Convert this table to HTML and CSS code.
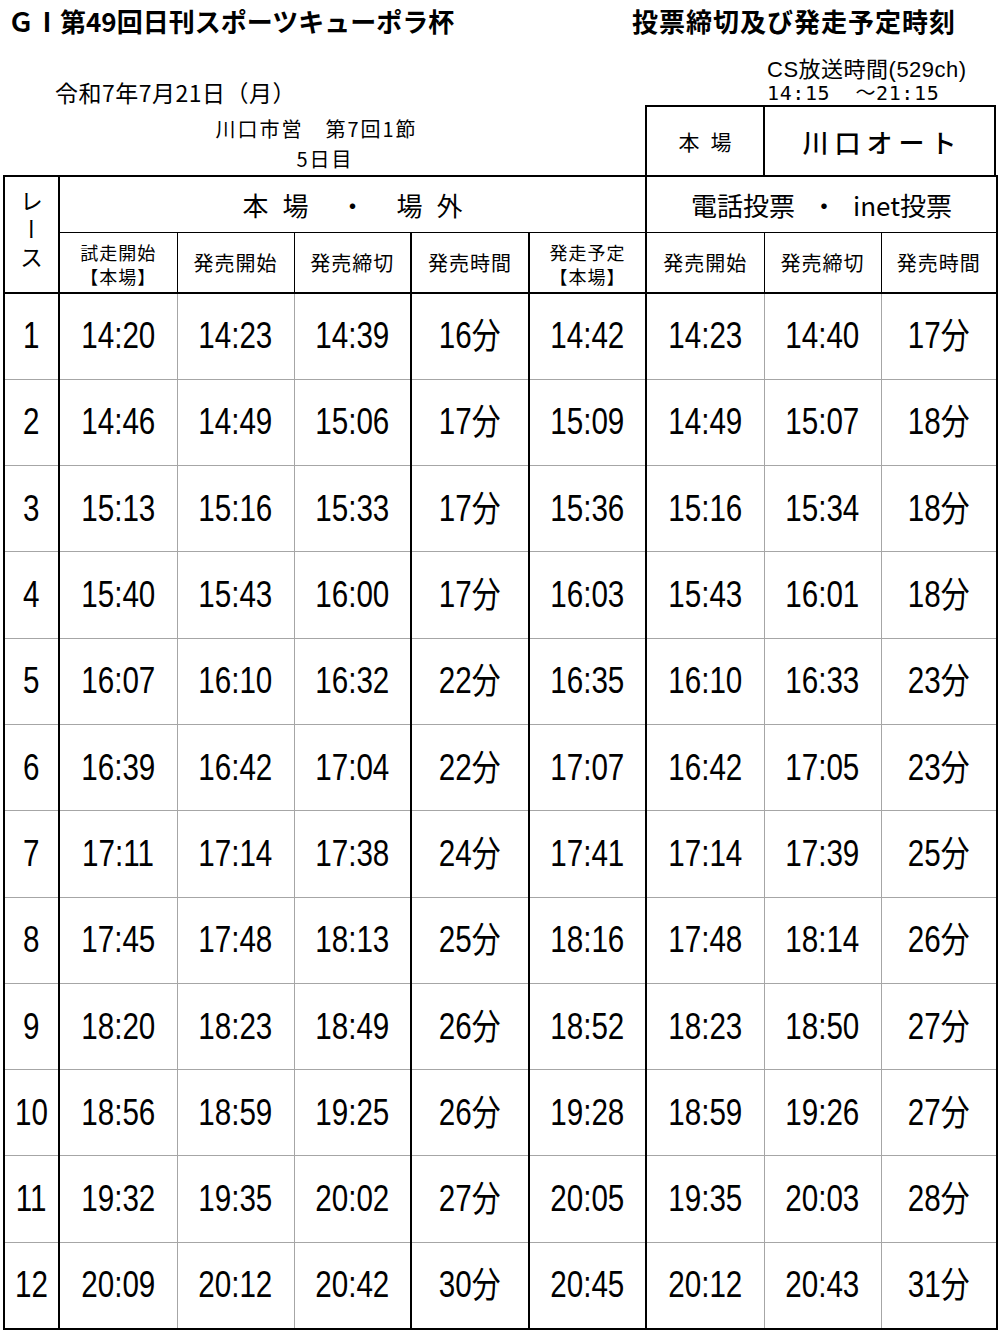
FILE: index.html
```html
<!DOCTYPE html>
<html lang="ja">
<head>
<meta charset="utf-8">
<title>投票締切及び発走予定時刻</title>
<link rel="stylesheet" href="styles.css">
</head>
<body>
<div class="page">
  <header class="titles">
    <h1 class="title-left">ＧⅠ第49回日刊スポーツキューポラ杯</h1>
    <h1 class="title-right">投票締切及び発走予定時刻</h1>
  </header>
  <div class="meta">
    <div class="meta-left">
      <p class="date">令和7年7月21日（月）</p>
      <p class="venue">川口市営　第7回1節</p>
      <p class="day">5日目</p>
    </div>
    <div class="meta-right">
      <div class="cs">
        <p class="cs-line">CS放送時間(529ch)</p>
        <p class="cs-time">14:15&nbsp;&nbsp;～21:15</p>
      </div>
      <div class="venue-box">
        <div class="vb-label"><span>本</span><span>場</span></div>
        <div class="vb-name">川口オート</div>
      </div>
    </div>
  </div>
  <table class="sched">
    <colgroup>
      <col class="w-race"><col class="w-a"><col class="w-b"><col class="w-c"><col class="w-d"><col class="w-e"><col class="w-f"><col class="w-g"><col class="w-h">
    </colgroup>
    <thead>
      <tr class="h1">
        <th class="race-h" rowspan="2"><span class="vert">レース</span></th>
        <th class="grp grp-a" colspan="5"><span class="g">本</span><span class="g">場</span><span class="g dot">・</span><span class="g">場</span><span class="g">外</span></th>
        <th class="grp grp-b" colspan="3">電話投票<span class="dot2">・</span>inet投票</th>
      </tr>
      <tr class="h2">
        <th class="sub thin"><span class="two"><span class="ln">試走開始</span><span class="ln">【本場】</span></span></th>
        <th class="sub thin">発売開始</th>
        <th class="sub thin">発売締切</th>
        <th class="sub thick">発売時間</th>
        <th class="sub thick"><span class="two"><span class="ln">発走予定</span><span class="ln">【本場】</span></span></th>
        <th class="sub thick">発売開始</th>
        <th class="sub thin">発売締切</th>
        <th class="sub thin">発売時間</th>
      </tr>
    </thead>
    <tbody>
      <tr><td class="rn"><span class="t">1</span></td><td class="bk"><span class="t">14:20</span></td><td class="gy"><span class="t">14:23</span></td><td class="gy"><span class="t">14:39</span></td><td class="bk"><span class="t">16<span class="fun">分</span></span></td><td class="bk"><span class="t">14:42</span></td><td class="bk"><span class="t">14:23</span></td><td class="gy"><span class="t">14:40</span></td><td class="gy"><span class="t">17<span class="fun">分</span></span></td></tr>
      <tr><td class="rn"><span class="t">2</span></td><td class="bk"><span class="t">14:46</span></td><td class="gy"><span class="t">14:49</span></td><td class="gy"><span class="t">15:06</span></td><td class="bk"><span class="t">17<span class="fun">分</span></span></td><td class="bk"><span class="t">15:09</span></td><td class="bk"><span class="t">14:49</span></td><td class="gy"><span class="t">15:07</span></td><td class="gy"><span class="t">18<span class="fun">分</span></span></td></tr>
      <tr><td class="rn"><span class="t">3</span></td><td class="bk"><span class="t">15:13</span></td><td class="gy"><span class="t">15:16</span></td><td class="gy"><span class="t">15:33</span></td><td class="bk"><span class="t">17<span class="fun">分</span></span></td><td class="bk"><span class="t">15:36</span></td><td class="bk"><span class="t">15:16</span></td><td class="gy"><span class="t">15:34</span></td><td class="gy"><span class="t">18<span class="fun">分</span></span></td></tr>
      <tr><td class="rn"><span class="t">4</span></td><td class="bk"><span class="t">15:40</span></td><td class="gy"><span class="t">15:43</span></td><td class="gy"><span class="t">16:00</span></td><td class="bk"><span class="t">17<span class="fun">分</span></span></td><td class="bk"><span class="t">16:03</span></td><td class="bk"><span class="t">15:43</span></td><td class="gy"><span class="t">16:01</span></td><td class="gy"><span class="t">18<span class="fun">分</span></span></td></tr>
      <tr><td class="rn"><span class="t">5</span></td><td class="bk"><span class="t">16:07</span></td><td class="gy"><span class="t">16:10</span></td><td class="gy"><span class="t">16:32</span></td><td class="bk"><span class="t">22<span class="fun">分</span></span></td><td class="bk"><span class="t">16:35</span></td><td class="bk"><span class="t">16:10</span></td><td class="gy"><span class="t">16:33</span></td><td class="gy"><span class="t">23<span class="fun">分</span></span></td></tr>
      <tr><td class="rn"><span class="t">6</span></td><td class="bk"><span class="t">16:39</span></td><td class="gy"><span class="t">16:42</span></td><td class="gy"><span class="t">17:04</span></td><td class="bk"><span class="t">22<span class="fun">分</span></span></td><td class="bk"><span class="t">17:07</span></td><td class="bk"><span class="t">16:42</span></td><td class="gy"><span class="t">17:05</span></td><td class="gy"><span class="t">23<span class="fun">分</span></span></td></tr>
      <tr><td class="rn"><span class="t">7</span></td><td class="bk"><span class="t">17:11</span></td><td class="gy"><span class="t">17:14</span></td><td class="gy"><span class="t">17:38</span></td><td class="bk"><span class="t">24<span class="fun">分</span></span></td><td class="bk"><span class="t">17:41</span></td><td class="bk"><span class="t">17:14</span></td><td class="gy"><span class="t">17:39</span></td><td class="gy"><span class="t">25<span class="fun">分</span></span></td></tr>
      <tr><td class="rn"><span class="t">8</span></td><td class="bk"><span class="t">17:45</span></td><td class="gy"><span class="t">17:48</span></td><td class="gy"><span class="t">18:13</span></td><td class="bk"><span class="t">25<span class="fun">分</span></span></td><td class="bk"><span class="t">18:16</span></td><td class="bk"><span class="t">17:48</span></td><td class="gy"><span class="t">18:14</span></td><td class="gy"><span class="t">26<span class="fun">分</span></span></td></tr>
      <tr><td class="rn"><span class="t">9</span></td><td class="bk"><span class="t">18:20</span></td><td class="gy"><span class="t">18:23</span></td><td class="gy"><span class="t">18:49</span></td><td class="bk"><span class="t">26<span class="fun">分</span></span></td><td class="bk"><span class="t">18:52</span></td><td class="bk"><span class="t">18:23</span></td><td class="gy"><span class="t">18:50</span></td><td class="gy"><span class="t">27<span class="fun">分</span></span></td></tr>
      <tr><td class="rn"><span class="t">10</span></td><td class="bk"><span class="t">18:56</span></td><td class="gy"><span class="t">18:59</span></td><td class="gy"><span class="t">19:25</span></td><td class="bk"><span class="t">26<span class="fun">分</span></span></td><td class="bk"><span class="t">19:28</span></td><td class="bk"><span class="t">18:59</span></td><td class="gy"><span class="t">19:26</span></td><td class="gy"><span class="t">27<span class="fun">分</span></span></td></tr>
      <tr><td class="rn"><span class="t">11</span></td><td class="bk"><span class="t">19:32</span></td><td class="gy"><span class="t">19:35</span></td><td class="gy"><span class="t">20:02</span></td><td class="bk"><span class="t">27<span class="fun">分</span></span></td><td class="bk"><span class="t">20:05</span></td><td class="bk"><span class="t">19:35</span></td><td class="gy"><span class="t">20:03</span></td><td class="gy"><span class="t">28<span class="fun">分</span></span></td></tr>
      <tr><td class="rn"><span class="t">12</span></td><td class="bk"><span class="t">20:09</span></td><td class="gy"><span class="t">20:12</span></td><td class="gy"><span class="t">20:42</span></td><td class="bk"><span class="t">30<span class="fun">分</span></span></td><td class="bk"><span class="t">20:45</span></td><td class="bk"><span class="t">20:12</span></td><td class="gy"><span class="t">20:43</span></td><td class="gy"><span class="t">31<span class="fun">分</span></span></td></tr>
    </tbody>
  </table>
</div>
</body>
</html>
```

FILE: styles.css
```css
* { box-sizing: border-box; }
html, body { margin: 0; padding: 0; background: #fff; }
body {
  color: #000;
  font-family: "Noto Sans CJK JP", "Liberation Sans", sans-serif;
}
p, h1 { margin: 0; }

.page { width: 1000px; }

.titles {
  display: flex;
  height: 42px;
  align-items: center;
  padding-left: 8px;
}
.title-left, .title-right {
  font-size: 26px;
  font-weight: 700;
  line-height: 42px;
  white-space: nowrap;
}
.title-right {
  margin-left: auto;
  margin-right: 44px;
  letter-spacing: 1px;
}

.meta {
  display: grid;
  grid-template-columns: 645px 355px;
  height: 133px;
}
.meta-left p { white-space: nowrap; }
.date {
  margin-top: 38px;
  padding-left: 55px;
  font-size: 23px;
  line-height: 24px;
  letter-spacing: 0.5px;
}
.venue {
  margin-top: 10px;
  font-size: 20px;
  line-height: 30px;
  letter-spacing: 2px;
  text-align: center;
  padding-right: 12px;
}
.day {
  font-size: 20px;
  line-height: 30px;
  letter-spacing: 2px;
  text-align: center;
  padding-left: 5px;
}

.meta-right { display: flex; flex-direction: column; }
.cs {
  height: 63px;
  padding-top: 16px;
  padding-left: 122px;
  white-space: nowrap;
}
.cs-line {
  font-family: "Liberation Sans", "Noto Sans CJK JP", sans-serif;
  font-size: 22px;
  line-height: 23px;
  letter-spacing: 0.5px;
}
.cs-time {
  font-family: "DejaVu Sans Mono", "Noto Sans CJK JP", monospace;
  font-size: 20px;
  line-height: 24px;
  letter-spacing: 0.6px;
}
.venue-box {
  width: 351px;
  height: 70px;
  display: grid;
  grid-template-columns: 118px 1fr;
  border: 2px solid #000;
  border-bottom: none;
}
.vb-label {
  border-right: 2px solid #000;
  display: flex;
  gap: 11px;
  align-items: center;
  justify-content: center;
  font-size: 21px;
}
.vb-name {
  display: flex;
  align-items: center;
  justify-content: center;
  font-size: 26px;
  font-weight: 500;
  letter-spacing: 6px;
  padding-left: 6px;
}

.sched {
  margin-left: 3px;
  width: 993px;
  border-collapse: collapse;
  table-layout: fixed;
  border: 2px solid #000;
}
.w-race { width: 55px; }
.w-a { width: 118px; }
.w-b { width: 117px; }
.w-c { width: 117px; }
.w-d { width: 118px; }
.w-e { width: 117px; }
.w-f { width: 118px; }
.w-g { width: 117px; }
.w-h { width: 116px; }

.sched th, .sched td {
  padding: 0;
  text-align: center;
  vertical-align: middle;
  font-weight: 400;
}
.h1 { height: 56px; }
.h2 { height: 61px; }
.race-h {
  border-right: 2px solid #000;
  border-bottom: 2px solid #000;
}
.vert {
  writing-mode: vertical-rl;
  font-size: 23px;
  letter-spacing: 5px;
  display: inline-block;
}
.grp {
  font-size: 26px;
  border-bottom: 1px solid #000;
  white-space: nowrap;
}
.grp-a { padding-right: 4px; }
.grp-b { border-left: 2px solid #000; }
.g { display: inline-block; margin: 0 7px; }
.g.dot { margin: 0 24px; }
.dot2 { margin: 0 16px; }

.sub {
  font-size: 20px;
  letter-spacing: 1px;
  border-bottom: 2px solid #000;
  white-space: nowrap;
}
.sub.thin { border-left: 1px solid #000; }
.sub.thick { border-left: 2px solid #000; }
.two {
  display: inline-flex;
  flex-direction: column;
  align-items: center;
  font-size: 18px;
}
.two .ln {
  display: block;
  line-height: 26px;
  height: 24px;
}

.sched tbody tr { height: 86.3px; }
.sched td {
  font-family: "Liberation Sans", "Noto Sans CJK JP", sans-serif;
  font-size: 37px;
  line-height: 42px;
  border-top: 1px solid #a6a6a6;
  white-space: nowrap;
}
.sched td.bk { border-left: 2px solid #000; }
.sched td.gy { border-left: 1px solid #a6a6a6; }
.t {
  display: inline-block;
  line-height: 42px;
  transform: scaleX(0.8);
  transform-origin: center;
}
.fun {
  font-family: "Noto Sans CJK JP", sans-serif;
  font-size: 36px;
  line-height: 0;
  vertical-align: -1px;
}
```
